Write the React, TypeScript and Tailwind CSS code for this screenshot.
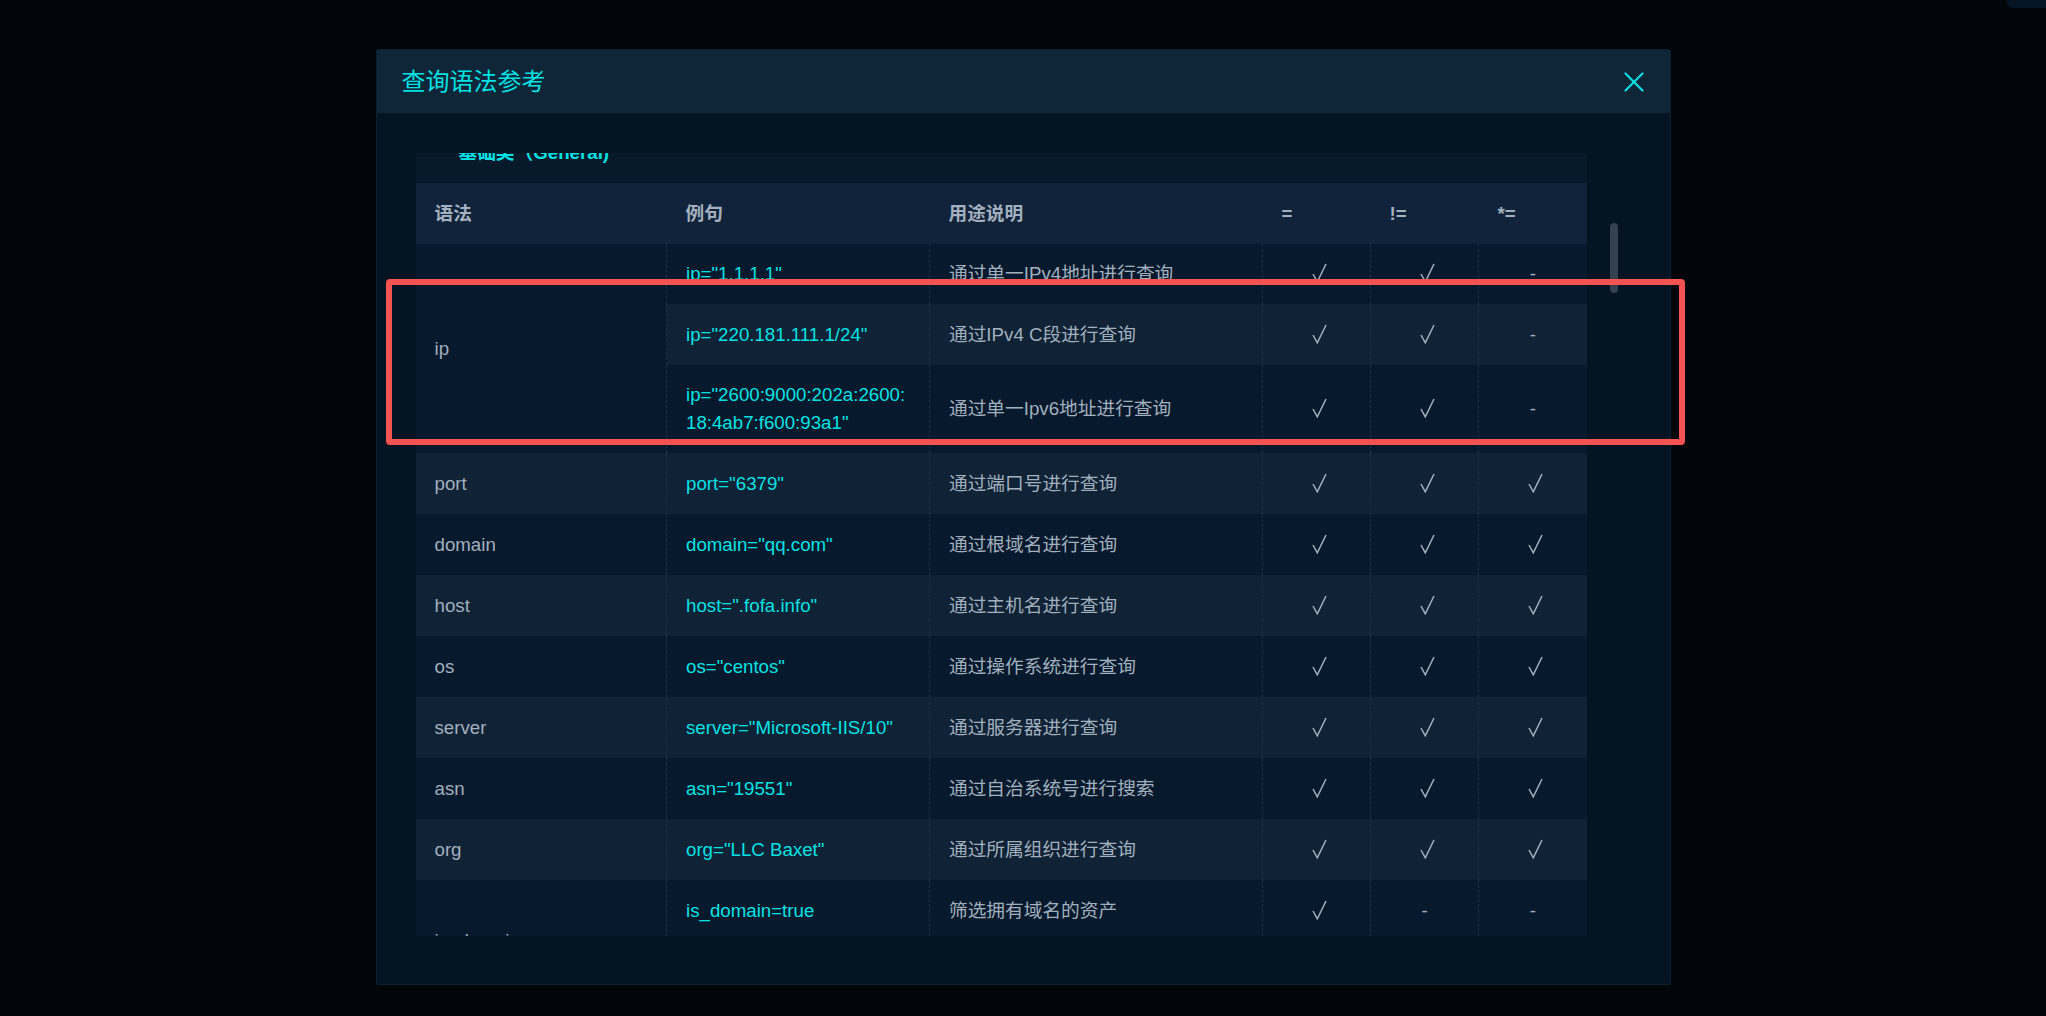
import React from 'react';

type Row = {
    name?: string;
    span?: number;
    example: React.ReactNode;
    desc: string;
    ops: [boolean, boolean, boolean];
    tall?: boolean;
    short?: boolean;
};

const rows: Row[] = [
    { name: 'ip', span: 3, example: 'ip="1.1.1.1"', desc: '通过单一IPv4地址进行查询', ops: [true, true, false], short: true },
    { example: 'ip="220.181.111.1/24"', desc: '通过IPv4 C段进行查询', ops: [true, true, false] },
    {
        example: (
            <>
                ip="2600:9000:202a:2600:
                <br />
                18:4ab7:f600:93a1"
            </>
        ),
        desc: '通过单一Ipv6地址进行查询',
        ops: [true, true, false],
        tall: true,
    },
    { name: 'port', span: 1, example: 'port="6379"', desc: '通过端口号进行查询', ops: [true, true, true] },
    { name: 'domain', span: 1, example: 'domain="qq.com"', desc: '通过根域名进行查询', ops: [true, true, true] },
    { name: 'host', span: 1, example: 'host=".fofa.info"', desc: '通过主机名进行查询', ops: [true, true, true] },
    { name: 'os', span: 1, example: 'os="centos"', desc: '通过操作系统进行查询', ops: [true, true, true] },
    { name: 'server', span: 1, example: 'server="Microsoft-IIS/10"', desc: '通过服务器进行查询', ops: [true, true, true] },
    { name: 'asn', span: 1, example: 'asn="19551"', desc: '通过自治系统号进行搜索', ops: [true, true, true] },
    { name: 'org', span: 1, example: 'org="LLC Baxet"', desc: '通过所属组织进行查询', ops: [true, true, true] },
    { name: 'is_domain', span: 2, example: 'is_domain=true', desc: '筛选拥有域名的资产', ops: [true, false, false] },
    { example: 'is_domain=false', desc: '筛选没有域名的资产', ops: [true, false, false] },
];

const CloseIcon = () => (
    <svg width="20" height="20" viewBox="0 0 20 20" fill="none" stroke="#00e1e4" strokeWidth="2.2" strokeLinecap="round">
        <line x1="1.5" y1="1.5" x2="18.5" y2="18.5" />
        <line x1="18.5" y1="1.5" x2="1.5" y2="18.5" />
    </svg>
);

// thin root-style check mark, as the font draws it in the original
const Check = () => (
    <svg width="15" height="20" viewBox="0 0 15 20" fill="none" stroke="#a2b0bf" strokeWidth="1.5" className="inline-block align-middle ml-[6px] mb-[4px]">
        <polyline points="1,11 5.3,18.8 14,1" />
    </svg>
);

const dashed = 'border-l border-dashed border-[#1c3045]';

const App = () => {
    return (
        <div className="relative w-full h-[1016px] overflow-hidden bg-[#02050a] font-[Liberation_Sans,Noto_Sans_CJK_SC,sans-serif]">
            <div className="absolute right-0 top-0 w-[40px] h-[8px] rounded-bl-[24px] bg-[#051526]" />

            <div className="mx-auto mt-[49px] w-[1295px] h-[936px] flex flex-col bg-[#041423] border border-[#0b1f2f] rounded-[2px]">
                <div className="h-[63px] shrink-0 flex items-center justify-between pl-[25px] pr-[26px] bg-[#0f2538]">
                    <span className="text-[24px] leading-[32px] text-[#00e1e4]">查询语法参考</span>
                    <CloseIcon />
                </div>

                <div className="flex pt-[40px] pl-[39px]">
                    <div className="w-[1171px] h-[783px] overflow-hidden bg-[#061a2c]">
                        <div className="-mt-[30px]">
                            <div className="h-[60px] pt-[16px] pl-[43px] text-[18.7px] leading-[28px] font-bold text-[#00e1e4]">
                                基础类（General)
                            </div>
                            <table className="w-full table-fixed border-collapse text-[18.7px] leading-[28px]">
                                <colgroup>
                                    <col className="w-[251px]" />
                                    <col className="w-[263px]" />
                                    <col className="w-[333px]" />
                                    <col className="w-[108px]" />
                                    <col className="w-[108px]" />
                                    <col className="w-[108px]" />
                                </colgroup>
                                <thead>
                                    <tr className="h-[61px] bg-[#10233a] text-[#a2b0bf] font-bold text-left">
                                        <th className="pl-[19px]">语法</th>
                                        <th className="pl-[19px]">例句</th>
                                        <th className="pl-[19px]">用途说明</th>
                                        <th className="pl-[19px]">=</th>
                                        <th className="pl-[19px]">!=</th>
                                        <th className="pl-[19px]">*=</th>
                                    </tr>
                                </thead>
                                <tbody>
                                    {rows.map((row, i) => (
                                        <tr
                                            key={i}
                                            className={`odd:bg-[#071a2d] even:bg-[#0f2236] ${row.tall ? 'h-[88px]' : row.short ? 'h-[60px]' : 'h-[61px]'}`}
                                        >
                                            {row.name && (
                                                <td rowSpan={row.span} className="pl-[19px] text-[#a2b0bf] align-middle">
                                                    {row.name}
                                                </td>
                                            )}
                                            <td className={`pl-[19px] text-[#00e1e4] ${dashed}`}>{row.example}</td>
                                            <td className={`pl-[19px] text-[#a2b0bf] ${dashed}`}>{row.desc}</td>
                                            {row.ops.map((ok, j) => (
                                                <td key={j} className={`text-center text-[#a2b0bf] ${dashed}`}>
                                                    {ok ? <Check /> : '-'}
                                                </td>
                                            ))}
                                        </tr>
                                    ))}
                                </tbody>
                            </table>
                        </div>
                    </div>
                    <div className="ml-[23px] mt-[70px] w-[8px] h-[70px] rounded-full bg-[#36414f]" />
                </div>
            </div>

            <div className="absolute left-[386px] top-[279px] w-[1299px] h-[166px] border-[6px] border-[#f55252] rounded-[4px]" />
        </div>
    );
};

export default App;
